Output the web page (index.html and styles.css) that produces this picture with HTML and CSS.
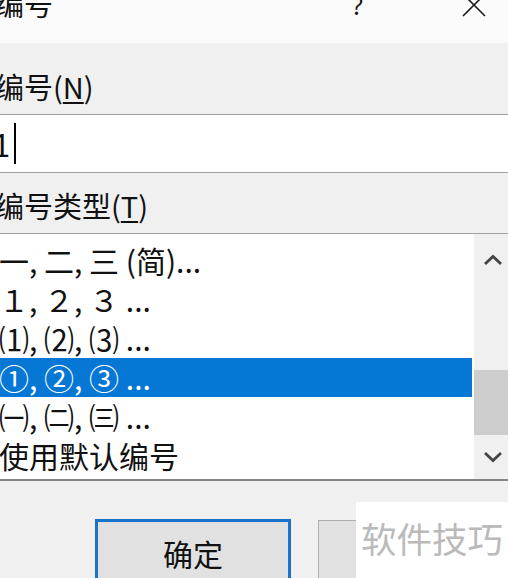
FILE: index.html
```html
<!DOCTYPE html>
<html lang="zh-CN">
<head>
<meta charset="utf-8">
<title>编号</title>
<link rel="stylesheet" href="styles.css">
</head>
<body>
<div class="dialog">
  <div class="titlebar">
    <span class="title">编号</span>
    <span class="help">?</span>
    <svg class="close" width="24" height="24" viewBox="0 0 24 24"><path d="M1 1 L23 23 M23 1 L1 23" stroke="#1a1a1a" stroke-width="1.6" fill="none"/></svg>
  </div>
  <div class="body">
    <div class="label">编号(<u>N</u>)</div>
    <div class="input"><span class="value">1</span><span class="caret"></span></div>
    <div class="label label-2">编号类型(<u>T</u>)</div>
    <div class="listbox">
      <ul class="items">
        <li>一, 二, 三 (简)...</li>
        <li>１, ２, ３ ...</li>
        <li>⑴, ⑵, ⑶ ...</li>
        <li class="selected">①, ②, ③ ...</li>
        <li>㈠, ㈡, ㈢ ...</li>
        <li>使用默认编号</li>
      </ul>
      <div class="scrollbar">
        <div class="arrow arrow-up"><svg width="20" height="12" viewBox="0 0 20 12"><path d="M2 10 L10 2.5 L18 10" stroke="#454545" stroke-width="2.8" fill="none"/></svg></div>
        <div class="track"><div class="thumb"></div></div>
        <div class="arrow arrow-down"><svg width="20" height="12" viewBox="0 0 20 12"><path d="M2 2 L10 9.5 L18 2" stroke="#454545" stroke-width="2.8" fill="none"/></svg></div>
      </div>
    </div>
    <div class="buttons">
      <div class="btn primary">确定</div>
      <div class="btn secondary"></div>
    </div>
  </div>
  <div class="watermark">软件技巧</div>
</div>
</body>
</html>
```
FILE: styles.css
```css
html, body {
  margin: 0;
  padding: 0;
  background: #f0f0f0;
}
.dialog {
  width: 508px;
  height: 578px;
  overflow: hidden;
  position: relative;
  background: #f0f0f0;
  font-family: "Noto Sans CJK SC", sans-serif;
  color: #111;
}
.titlebar {
  height: 43px;
  background: #fbfbfc;
  display: flex;
  align-items: flex-start;
  overflow: hidden;
}
.title {
  flex: 1;
  font-size: 29px;
  line-height: 29px;
  margin-top: -11px;
  margin-left: -5px;
}
.help {
  flex: 0 0 16px;
  margin-right: 94px;
  font-family: "Noto Sans", sans-serif;
  font-size: 25px;
  line-height: 25px;
  margin-top: -7px;
  color: #111;
}
.close {
  flex: 0 0 24px;
  margin-top: -7px;
  margin-right: 22px;
}
.body {
  padding-top: 29px;
}
.label {
  font-size: 29px;
  line-height: 28px;
  height: 28px;
  margin-left: -5px;
  white-space: nowrap;
}
.label u {
  text-decoration-thickness: 2px;
  text-underline-offset: 3px;
}
.label-2 {
  margin-top: 18px;
}
.input {
  margin-top: 14px;
  height: 57px;
  background: #fff;
  border-top: 1px solid #a0a0a0;
  border-bottom: 1px solid #a0a0a0;
  display: flex;
  align-items: center;
}
.value {
  font-size: 31px;
  line-height: 30px;
  margin-left: -7px;
}
.caret {
  width: 2px;
  height: 41px;
  background: #000;
  margin-left: 4px;
}
.listbox {
  margin-top: 14px;
  height: 245px;
  display: flex;
  background: #fff;
  border-top: 1px solid #a0a0a0;
  border-bottom: 2px solid #858585;
}
.items {
  flex: 0 0 472px;
  list-style: none;
  margin: 0 2px 0 0;
  padding: 7px 0 0 0;
}
.items li {
  height: 39px;
  line-height: 39px;
  font-size: 30px;
  text-indent: -1px;
  white-space: nowrap;
  color: #111;
}
.items li.selected {
  background: #0677d5;
  color: #fff;
}
.scrollbar {
  flex: 1;
  background: #f0f0f0;
  display: flex;
  flex-direction: column;
}
.arrow {
  display: flex;
  align-items: center;
  justify-content: center;
  padding-left: 4px;
}
.arrow-up {
  height: 52px;
}
.arrow-down {
  height: 44px;
}
.track {
  flex: 1;
  display: flex;
  flex-direction: column;
  justify-content: flex-end;
}
.thumb {
  height: 65px;
  background: #cdcdcd;
}
.buttons {
  display: flex;
  align-items: flex-start;
  margin-top: 38px;
  padding-left: 95px;
}
.btn {
  box-sizing: border-box;
  flex-shrink: 0;
  height: 70px;
  background: #e1e1e1;
}
.btn.primary {
  width: 196px;
  border: 3px solid #1a72c9;
  font-size: 30px;
  line-height: 29px;
  padding-top: 17px;
  text-align: center;
  color: #111;
}
.btn.secondary {
  width: 200px;
  margin-left: 27px;
  margin-top: 1px;
  border: 1px solid #adadad;
}
.watermark {
  position: absolute;
  left: 356px;
  top: 502px;
  width: 152px;
  height: 76px;
  box-sizing: border-box;
  background: #fff;
  padding: 18px 0 0 5px;
  font-size: 35.5px;
  line-height: 35px;
  color: #bababa;
  white-space: nowrap;
}
```
